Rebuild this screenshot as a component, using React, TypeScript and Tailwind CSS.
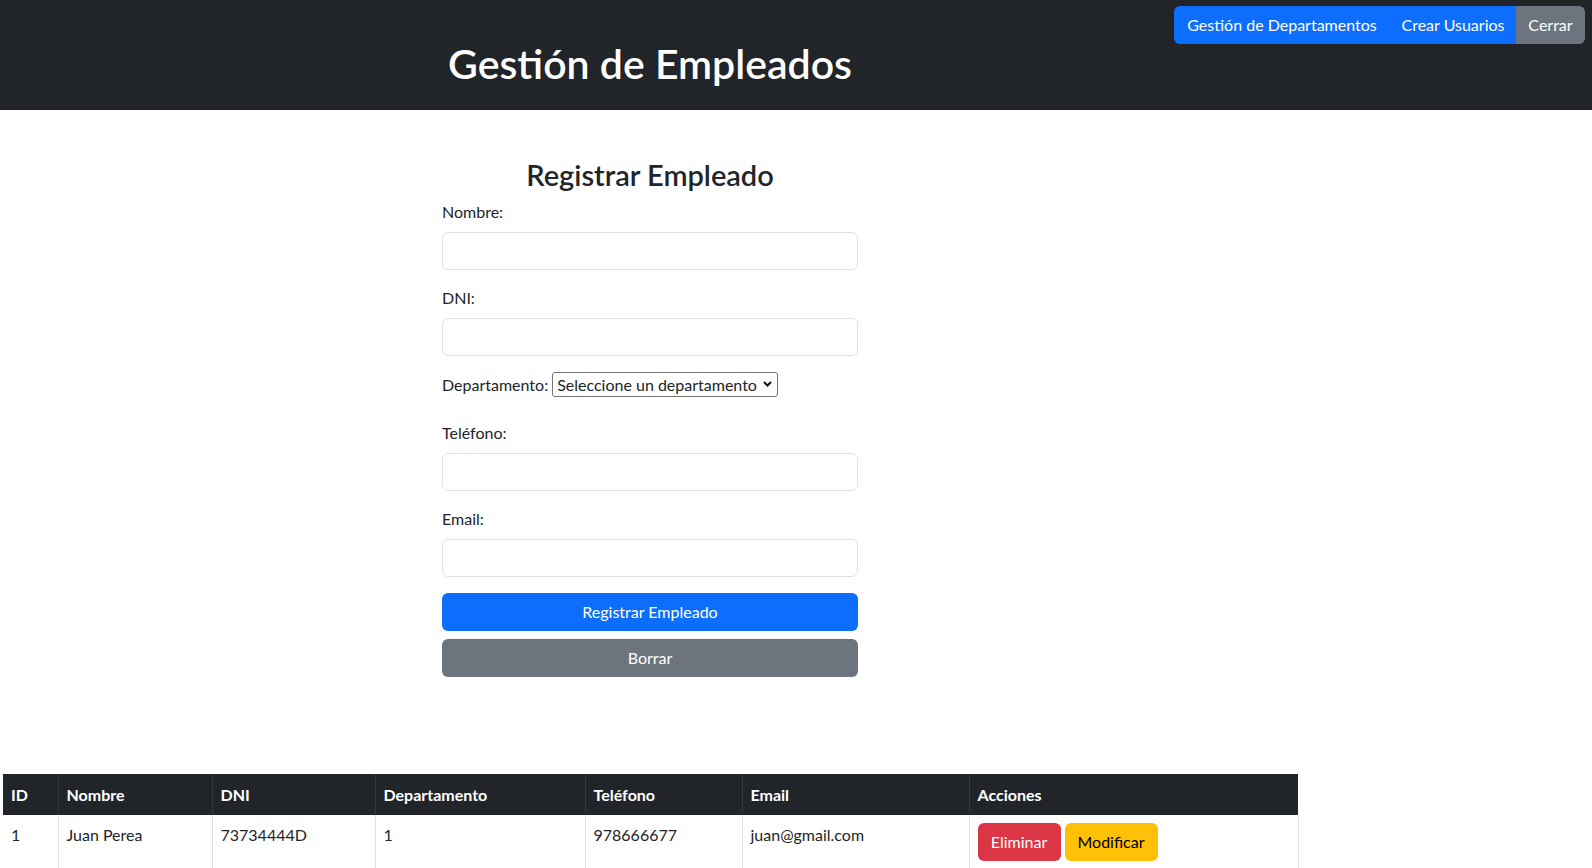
const font = { fontFamily: '"Segoe UI", Lato, "Liberation Sans", sans-serif' };

function NavBar() {
  return (
    <div className="absolute right-[7px] top-[6px] flex h-[38px] overflow-hidden rounded-md text-base text-white">
      <button className="w-[216px] bg-[#0d6efd] text-center">Gestión de Departamentos</button>
      <button className="w-[126px] bg-[#0d6efd] text-center">Crear Usuarios</button>
      <button className="w-[69px] bg-[#6c757d] text-center">Cerrar</button>
    </div>
  );
}

function Field({ label, mb = 'mb-4' }: { label: string; mb?: string }) {
  return (
    <div className={mb}>
      <label className="mb-2 block h-6 leading-6">{label}</label>
      <input className="block h-[38px] w-full rounded-md border border-[#dee2e6] bg-white px-3 outline-none" />
    </div>
  );
}

function RegisterForm() {
  return (
    <form className="mx-auto mt-[48px] w-[416px]" onSubmit={(e) => e.preventDefault()}>
      <h3 className="mb-2 h-[34px] text-center text-[29px] font-semibold leading-[34px]">Registrar Empleado</h3>
      <Field label="Nombre:" />
      <Field label="DNI:" />
      <div className="mb-[24px] flex h-[25px] items-center">
        <label className="mr-1">Departamento:</label>
        <div className="relative">
          <select className="h-[25px] w-[226px] appearance-none rounded-[3px] border border-[#767676] bg-white pl-1 pr-5 leading-[23px] outline-none">
            <option>Seleccione un departamento</option>
          </select>
          <svg
            className="pointer-events-none absolute right-[6px] top-[9px]"
            width="9"
            height="6"
            viewBox="0 0 9 6"
            fill="none"
            stroke="#111"
            strokeWidth="2"
          >
            <path d="M1 1l3.5 3.5L8 1" />
          </svg>
        </div>
      </div>
      <Field label="Teléfono:" />
      <Field label="Email:" />
      <button className="mb-2 block h-[38px] w-full rounded-md bg-[#0d6efd] text-white">Registrar Empleado</button>
      <button type="button" className="block h-[38px] w-full rounded-md bg-[#6c757d] text-white">Borrar</button>
    </form>
  );
}

const cols = [
  { h: 'ID', w: 'w-[55px]' },
  { h: 'Nombre', w: 'w-[154px]' },
  { h: 'DNI', w: 'w-[163px]' },
  { h: 'Departamento', w: 'w-[210px]' },
  { h: 'Teléfono', w: 'w-[157px]' },
  { h: 'Email', w: 'w-[227px]' },
  { h: 'Acciones', w: 'w-[329px]' },
];

const empleados = [
  { id: 1, nombre: 'Juan Perea', dni: '73734444D', dep: 1, tel: '978666677', email: 'juan@gmail.com' },
];

function EmployeeTable() {
  return (
    <table className="ml-[3px] mt-[97px] w-[1295px] table-fixed border-collapse">
      <thead>
        <tr className="bg-[#212529] text-white">
          {cols.map((c, i) => (
            <th
              key={c.h}
              className={`${c.w} h-[41px] px-2 text-left font-bold ${i > 0 ? 'border-l border-[#32383e]' : ''}`}
            >
              {c.h}
            </th>
          ))}
        </tr>
      </thead>
      <tbody>
        {empleados.map((e) => (
          <tr key={e.id} className="align-top">
            <td className="px-2 py-2">{e.id}</td>
            <td className="border-l border-[#dee2e6] px-2 py-2">{e.nombre}</td>
            <td className="border-l border-[#dee2e6] px-2 py-2">{e.dni}</td>
            <td className="border-l border-[#dee2e6] px-2 py-2">{e.dep}</td>
            <td className="border-l border-[#dee2e6] px-2 py-2">{e.tel}</td>
            <td className="border-l border-[#dee2e6] px-2 py-2">{e.email}</td>
            <td className="border-x border-[#dee2e6] px-2 py-2">
              <div className="flex gap-1">
                <button className="h-[38px] w-[83px] rounded-md bg-[#dc3545] text-white">Eliminar</button>
                <button className="h-[38px] w-[93px] rounded-md bg-[#ffc107] text-black">Modificar</button>
              </div>
            </td>
          </tr>
        ))}
      </tbody>
    </table>
  );
}

export default function App() {
  return (
    <div className="min-h-screen bg-white text-base leading-6 text-[#212529]" style={font}>
      {/* Header */}
      <header className="relative h-[110px] bg-[#212529]">
        <div className="w-[1300px] pt-[40px] text-center">
          <h1 className="text-[41px] font-semibold leading-[48px] text-white">Gestión de Empleados</h1>
        </div>
        <NavBar />
      </header>

      <main className="w-[1300px] pb-10">
        <RegisterForm />
        <EmployeeTable />
      </main>
    </div>
  );
}
